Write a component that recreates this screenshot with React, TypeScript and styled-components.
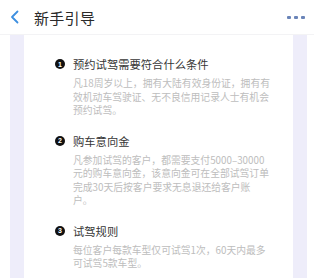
import React from "react";
import styled, { createGlobalStyle } from "styled-components";

const Global = createGlobalStyle`
  html, body { margin: 0; padding: 0; background: #ffffff; }
  body { font-family: "Noto Sans CJK SC", "Noto Sans", sans-serif; }
`;

const Page = styled.div`
  width: 314px;
  height: 278px;
  overflow: hidden;
  background: #ffffff;
`;

const Header = styled.header`
  height: 35px;
  display: flex;
  align-items: center;
  padding: 0 9px 0 10px;
  box-sizing: border-box;
  background: #ffffff;
  border-bottom: 1px solid #f3f3f5;
`;

const Back = styled.svg`
  width: 10px;
  height: 14px;
  flex: none;
`;

const Title = styled.h1`
  margin: 0 0 0 14px;
  font-size: 15px;
  font-weight: 400;
  color: #2a2a2a;
  letter-spacing: 0.3px;
  flex: 1;
`;

const Dots = styled.div`
  display: flex;
  gap: 3px;
  padding-top: 1px;
`;

const Dot = styled.span`
  width: 4px;
  height: 3px;
  border-radius: 1px;
  background: #6a84b8;
`;

const Frame = styled.div`
  margin: 0 7px 0 10px;
  padding: 0 14px;
  background: #eeedfa;
  height: 243px;
`;

const Card = styled.div`
  background: #ffffff;
  height: 100%;
  padding: 21px 0 0 31px;
  box-sizing: border-box;
  display: flex;
  flex-direction: column;
  gap: 15px;
`;

const Section = styled.section`
  display: flex;
  flex-direction: column;
`;

const SectionHead = styled.div`
  display: flex;
  align-items: center;
  gap: 8px;
  height: 16px;
`;

const Num = styled.span`
  width: 10px;
  height: 10px;
  border-radius: 50%;
  background: #111;
  color: #fff;
  font-family: "Liberation Sans", sans-serif;
  font-size: 7px;
  font-weight: 700;
  display: flex;
  align-items: center;
  justify-content: center;
  flex: none;
`;

const SectionTitle = styled.h2`
  margin: 0;
  font-size: 11.3px;
  font-weight: 400;
  color: #363636;
  line-height: 16px;
`;

const Body = styled.p`
  margin: 5px 0 0 18px;
  font-size: 9.8px;
  line-height: 13.5px;
  color: #bdbdbd;
  white-space: nowrap;
`;

const sections = [
  {
    n: 1,
    title: "预约试驾需要符合什么条件",
    lines: [
      "凡18周岁以上，拥有大陆有效身份证，拥有有",
      "效机动车驾驶证、无不良信用记录人士有机会",
      "预约试驾。",
    ],
  },
  {
    n: 2,
    title: "购车意向金",
    lines: [
      "凡参加试驾的客户，都需要支付5000–30000",
      "元的购车意向金，该意向金可在全部试驾订单",
      "完成30天后按客户要求无息退还给客户账",
      "户。",
    ],
  },
  {
    n: 3,
    title: "试驾规则",
    lines: ["每位客户每款车型仅可试驾1次，60天内最多", "可试驾5款车型。"],
  },
];

export default function App() {
  return (
    <Page>
      <Global />
      <Header>
        <Back viewBox="0 0 10 14">
          <path d="M7.5 1.5 L2 7 L7.5 12.5" fill="none" stroke="#3d8fe0" strokeWidth="1.8" strokeLinecap="round" strokeLinejoin="round" />
        </Back>
        <Title>新手引导</Title>
        <Dots>
          <Dot />
          <Dot />
          <Dot />
        </Dots>
      </Header>
      <Frame>
        <Card>
          {sections.map((s) => (
            <Section key={s.n}>
              <SectionHead>
                <Num>{s.n}</Num>
                <SectionTitle>{s.title}</SectionTitle>
              </SectionHead>
              <Body>
                {s.lines.map((l, i) => (
                  <React.Fragment key={i}>
                    {i > 0 && <br />}
                    {l}
                  </React.Fragment>
                ))}
              </Body>
            </Section>
          ))}
        </Card>
      </Frame>
    </Page>
  );
}
